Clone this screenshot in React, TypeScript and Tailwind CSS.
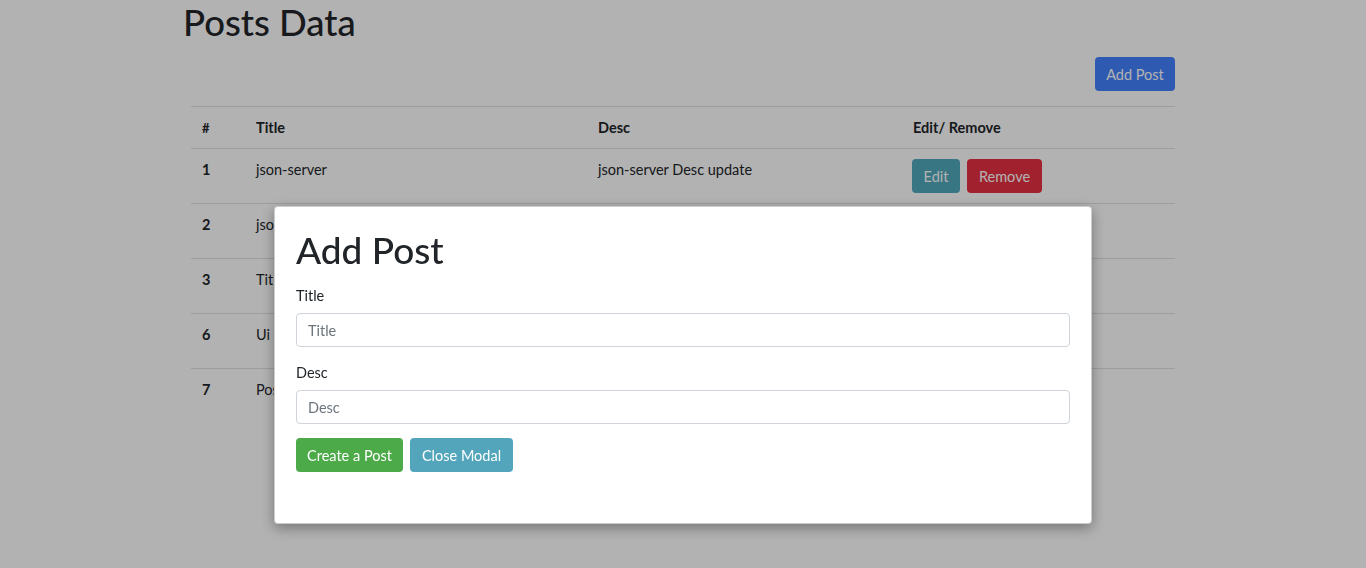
import React from "react"

const rows = [
  { id: 1, title: "json-server", desc: "json-server Desc update" },
  { id: 2, title: "json-server 2", desc: "json-server Desc 2" },
  { id: 3, title: "Title 3", desc: "Desc 3" },
  { id: 6, title: "Ui design", desc: "Ui design desc" },
  { id: 7, title: "Post seven", desc: "Post seven desc" },
]

function PostsTable() {
  return (
    <table className="w-[984px] border-collapse text-left text-[14.5px] text-[#212529]">
      <thead>
        <tr className="border-t border-[#dee2e6]">
          <th className="w-[54px] px-[11px] pt-[11px] pb-[10px] align-top text-[13px] font-bold leading-[20px]">#</th>
          <th className="w-[342px] px-[11px] pt-[11px] pb-[10px] align-top font-bold leading-[20px]">Title</th>
          <th className="w-[315px] px-[11px] pt-[11px] pb-[10px] align-top font-bold leading-[20px]">Desc</th>
          <th className="px-[11px] pt-[11px] pb-[10px] align-top font-bold leading-[20px]">Edit/ Remove</th>
        </tr>
      </thead>
      <tbody>
        {rows.map((r) => (
          <tr key={r.id} className="border-t border-[#dee2e6]">
            <td className="px-[11px] pt-[11px] pb-[10px] align-top font-bold leading-[20px]">{r.id}</td>
            <td className="px-[11px] pt-[11px] pb-[10px] align-top leading-[20px]">{r.title}</td>
            <td className="px-[11px] pt-[11px] pb-[10px] align-top leading-[20px]">{r.desc}</td>
            <td className="px-[10px] pt-[10px] pb-[10px] align-top">
              <div className="flex gap-[7px]">
                <button className="h-[34px] w-[48px] rounded-[4px] bg-[#52a9bc] pt-[2px] text-[14.5px] text-white">Edit</button>
                <button className="h-[34px] w-[75px] rounded-[4px] bg-[#e73143] pt-[2px] text-[14.5px] text-white">Remove</button>
              </div>
            </td>
          </tr>
        ))}
      </tbody>
    </table>
  )
}

function AddPostModal() {
  return (
    <div className="fixed inset-0 bg-black/30">
      <div className="mx-auto mt-[206px] h-[318px] w-[818px] rounded-[4px] border border-black/20 bg-white px-[21px] pt-[21px] shadow-[0_4px_14px_rgba(0,0,0,0.35)]">
        <h2 className="text-[37px] font-medium leading-[44px] text-[#212529]">Add Post</h2>
        <form className="mt-[14px] text-[14.5px] text-[#212529]">
          <label className="block leading-[20px]">Title</label>
          <input
            type="text"
            placeholder="Title"
            className="mt-[7px] h-[34px] w-full rounded-[4px] border border-[#ced4da] px-[11px] pt-[1px] placeholder:text-[#6c757d] focus:outline-none"
          />
          <label className="mt-[16px] block leading-[20px]">Desc</label>
          <input
            type="text"
            placeholder="Desc"
            className="mt-[7px] h-[34px] w-full rounded-[4px] border border-[#ced4da] px-[11px] pt-[1px] placeholder:text-[#6c757d] focus:outline-none"
          />
          <div className="mt-[14px] flex gap-[7px]">
            <button type="button" className="h-[34px] w-[107px] rounded-[4px] bg-[#4caa48] pt-[2px] text-white">
              Create a Post
            </button>
            <button type="button" className="h-[34px] w-[103px] rounded-[4px] bg-[#52a5bb] pt-[2px] text-white">
              Close Modal
            </button>
          </div>
        </form>
      </div>
    </div>
  )
}

export default function App() {
  return (
    <div className="min-h-screen bg-white font-['Lato',sans-serif]">
      <div className="ml-[183px] w-[992px]">
        <h1 className="pt-[1px] text-[36.5px] font-medium leading-[43px] text-[#212529]">Posts Data</h1>
        <div className="pl-[8px]">
          <div className="mt-[13px] flex justify-end">
            <button className="h-[34px] w-[80px] rounded-[4px] bg-[#4282fe] pt-[2px] text-[14.5px] text-white">Add Post</button>
          </div>
          <div className="mt-[15px]">
            <PostsTable />
          </div>
        </div>
      </div>
      <AddPostModal />
    </div>
  )
}
